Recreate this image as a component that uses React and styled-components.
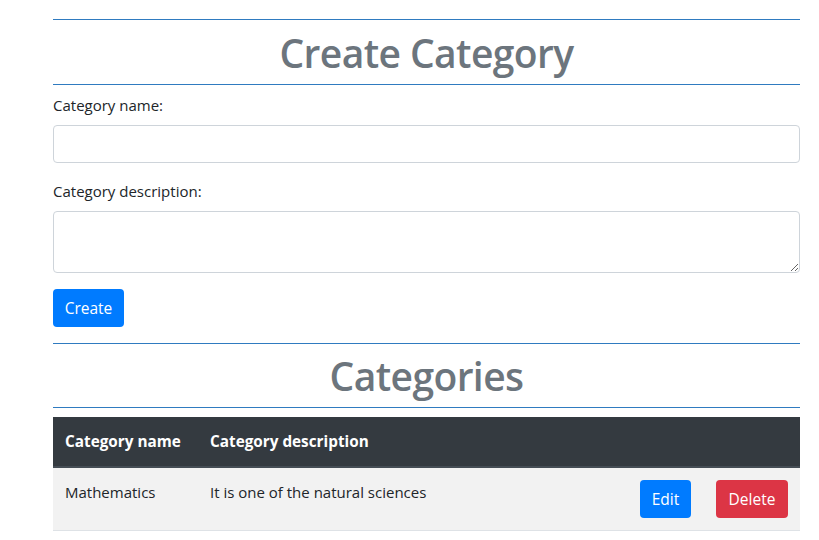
import React from 'react';
import styled, { createGlobalStyle } from 'styled-components';

const GlobalStyle = createGlobalStyle`
  body {
    margin: 0;
    background: #fff;
    font-family: "Open Sans", "Noto Sans", sans-serif;
    font-size: 15px;
    color: #212529;
  }
  * { box-sizing: border-box; }
`;

const Container = styled.div`
  width: 747px;
  margin-left: 53px;
  padding-top: 19px;
`;

const Rule = styled.hr`
  margin: 0;
  border: 0;
  border-top: 1px solid #2f7bc0;
`;

const Title = styled.h1`
  margin: 0;
  height: ${props => props.tall}px;
  display: flex;
  align-items: center;
  justify-content: center;
  font-size: 39px;
  font-weight: 600;
  letter-spacing: -0.6px;
  color: #6c757d;
`;

const Form = styled.form`
  padding-top: 8px;
  padding-bottom: 16px;
`;

const Group = styled.div`
  margin-bottom: 16px;
`;

const Label = styled.label`
  display: block;
  line-height: 24px;
  margin-bottom: 8px;
`;

const Input = styled.input`
  display: block;
  width: 100%;
  height: 38px;
  border: 1px solid #ced4da;
  border-radius: 4px;
  padding: 6px 12px;
  font: inherit;
`;

const TextArea = styled.textarea`
  display: block;
  width: 100%;
  height: 62px;
  border: 1px solid #ced4da;
  border-radius: 4px;
  padding: 6px 12px;
  font: inherit;
  resize: vertical;
`;

const Button = styled.button`
  display: block;
  width: ${props => props.w}px;
  height: 38px;
  padding: 0;
  border: 0;
  border-radius: 4px;
  background: ${props => props.danger ? '#dc3545' : '#007bff'};
  color: #fff;
  font: inherit;
  font-size: 15.5px;
  cursor: pointer;
`;

const Table = styled.table`
  width: 100%;
  margin-top: 9px;
  border-collapse: collapse;
  table-layout: fixed;
`;

const Th = styled.th`
  background: #343a40;
  color: #fff;
  text-align: left;
  font-weight: 700;
  font-size: 15.3px;
  padding: 12px;
  line-height: 25px;
  border-bottom: 2px solid #454d55;
`;

const Td = styled.td`
  background: #f2f2f2;
  padding: 12px;
  line-height: 24px;
  vertical-align: top;
  border-bottom: 1px solid #dee2e6;
`;

const categories = [
  { name: 'Mathematics', description: 'It is one of the natural sciences' }
];

export default function App() {
  return (
    <>
      <GlobalStyle />
      <Container>
        <Rule />
        <Title tall={64}>Create Category</Title>
        <Rule />
        <Form onSubmit={e => e.preventDefault()}>
          <Group>
            <Label htmlFor="catName">Category name:</Label>
            <Input id="catName" type="text" />
          </Group>
          <Group>
            <Label htmlFor="catDesc">Category description:</Label>
            <TextArea id="catDesc" />
          </Group>
          <Button type="submit" w={71}>Create</Button>
        </Form>
        <Rule />
        <Title tall={63}>Categories</Title>
        <Rule />
        <Table>
          <colgroup>
            <col style={{ width: 145 }} />
            <col style={{ width: 430 }} />
            <col style={{ width: 76 }} />
            <col style={{ width: 96 }} />
          </colgroup>
          <thead>
            <tr>
              <Th>Category name</Th>
              <Th>Category description</Th>
              <Th />
              <Th />
            </tr>
          </thead>
          <tbody>
            {categories.map(c => (
              <tr key={c.name}>
                <Td>{c.name}</Td>
                <Td>{c.description}</Td>
                <Td><Button w={51}>Edit</Button></Td>
                <Td><Button danger w={72}>Delete</Button></Td>
              </tr>
            ))}
          </tbody>
        </Table>
      </Container>
    </>
  );
}
